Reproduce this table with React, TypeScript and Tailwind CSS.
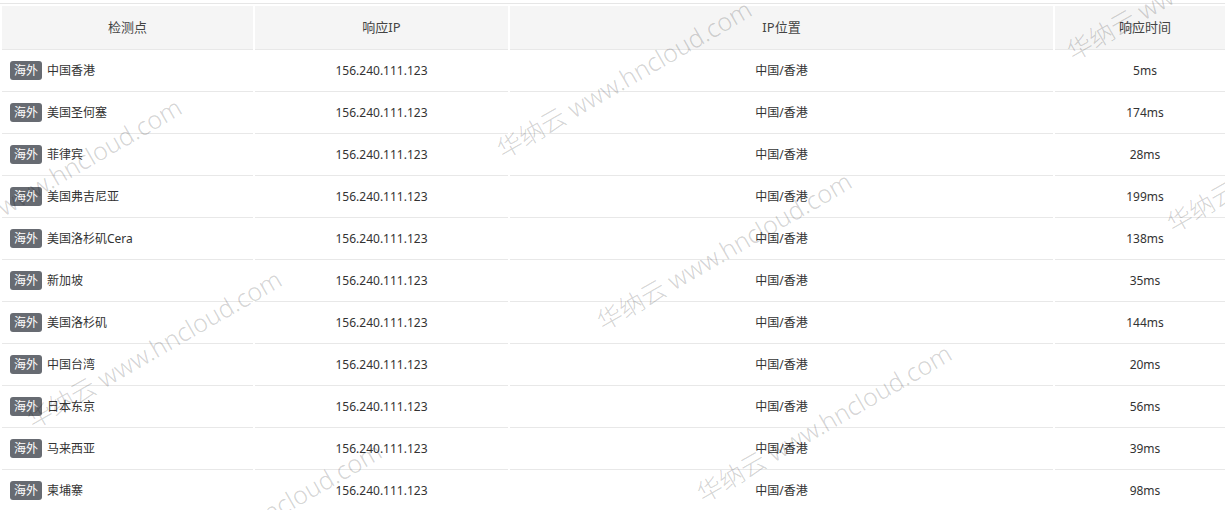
import React from "react";

const rows: [string, string][] = [
  ["中国香港", "5ms"],
  ["美国圣何塞", "174ms"],
  ["菲律宾", "28ms"],
  ["美国弗吉尼亚", "199ms"],
  ["美国洛杉矶Cera", "138ms"],
  ["新加坡", "35ms"],
  ["美国洛杉矶", "144ms"],
  ["中国台湾", "20ms"],
  ["日本东京", "56ms"],
  ["马来西亚", "39ms"],
  ["柬埔寨", "98ms"],
];

const marks: { x: number; y: number }[] = [];
for (let i = -2; i <= 2; i++) {
  for (let j = -2; j <= 3; j++) {
    const x = 505 + 570 * i + 100 * j;
    const y = 162 - 98 * i + 172 * j;
    if (x > -330 && x < 1225 && y > 0 && y < 680) marks.push({ x, y });
  }
}

export default function App() {
  return (
    <div
      className="relative w-[1225px] h-[510px] overflow-hidden bg-white text-[#333]"
      style={{ fontFamily: '"Noto Sans", "Noto Sans CJK SC", sans-serif' }}
    >
      <div className="mt-[3px] border-t border-[#e6e6e6] pt-[2px]">
        <table className="table-fixed w-[1237px] border-separate border-spacing-x-[2px] border-spacing-y-0">
          <colgroup>
            <col className="w-[251px]" />
            <col className="w-[253px]" />
            <col className="w-[543px]" />
            <col className="w-[180px]" />
          </colgroup>
          <thead>
            <tr>
              {["检测点", "响应IP", "IP位置", "响应时间"].map((h) => (
                <th
                  key={h}
                  className="h-[44px] bg-[#f5f5f5] border-b border-[#e8e8e8] text-[13px] font-normal text-center text-[#444] p-0"
                >
                  {h}
                </th>
              ))}
            </tr>
          </thead>
          <tbody>
            {rows.map(([name, t]) => (
              <tr key={name}>
                <td className="h-[42px] border-b border-[#e8e8e8] text-[12px] pl-[8px] p-0">
                  <div className="flex items-center gap-[5px]">
                    <span className="inline-flex items-center justify-center w-[32px] h-[19px] rounded-[3px] bg-[#676b72] text-white text-[12px] leading-none">
                      海外
                    </span>
                    <span>{name}</span>
                  </div>
                </td>
                <td className="h-[42px] border-b border-[#e8e8e8] text-[12px] text-center p-0">
                  156.240.111.123
                </td>
                <td className="h-[42px] border-b border-[#e8e8e8] text-[12px] text-center p-0">
                  中国/香港
                </td>
                <td className="h-[42px] border-b border-[#e8e8e8] text-[12px] text-center p-0">
                  {t}
                </td>
              </tr>
            ))}
          </tbody>
        </table>
      </div>
      {marks.map((m, k) => (
        <span
          key={k}
          className="pointer-events-none absolute whitespace-nowrap text-[25px] leading-[25px] font-light text-[rgba(0,0,0,0.18)] origin-bottom-left -rotate-30"
          style={{ left: m.x, top: m.y - 25 }}
        >
          华纳云 www.hncloud.com
        </span>
      ))}
    </div>
  );
}
